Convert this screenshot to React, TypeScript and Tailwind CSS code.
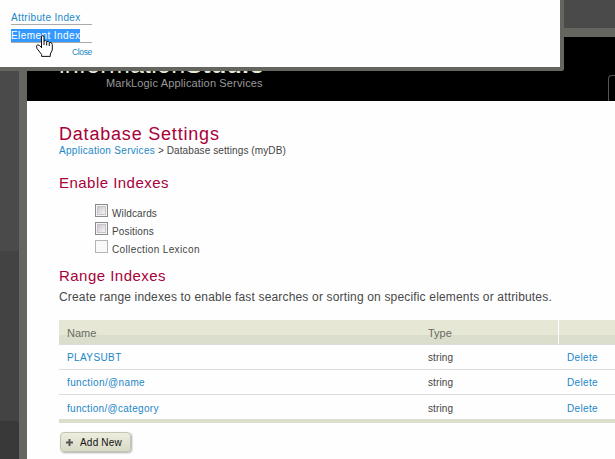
import React from "react";

const rows = [
  { name: "PLAYSUBT", tracking: "tracking-[0.4px]", pad: "pt-[2px]" },
  { name: "function/@name", tracking: "tracking-[0.36px]", pad: "pt-[2px]" },
  { name: "function/@category", tracking: "tracking-[0.3px]", pad: "pt-[4px]" },
];

function Check({ label, disabled, tracking }: { label: string; disabled?: boolean; tracking: string }) {
  return (
    <label className="flex h-[18px] items-start gap-[4px]">
      <span
        className={
          disabled
            ? "h-[13px] w-[13px] border border-[#b4b4b4] bg-[#f8f8f6]"
            : "flex h-[13px] w-[13px] border border-[#8a8a8a] bg-[#f4f4f4] p-px"
        }
      >
        {!disabled && <span className="flex-1 border border-[#c8c4c8] bg-linear-to-br from-[#cdc6cf] to-[#f6f4f6]" />}
      </span>
      <span className={"pt-[4px] text-[10px] leading-[12px] text-[#444] " + tracking}>{label}</span>
    </label>
  );
}

function HandCursor() {
  return (
    <svg className="absolute left-[36px] top-[35px]" width="17" height="22" viewBox="0 0 17 22">
      <path
        d="M5.5 13 V2 Q5.5 .6 6.7 .6 T8 2 V6 Q9.8 5 10.7 6.6 Q12.3 5.8 13.3 7.5 Q16 6.8 16.3 9.5 V15 L14.3 19 V21.4 H5.6 V19.5 L1 13.5 Q-.3 10.8 1.5 9.8 Q3 9.5 5.5 12.5"
        fill="#fff"
        stroke="#111"
        strokeWidth="1"
      />
      <path d="M8 6 V10 M10.7 7 V10.5 M13.3 8 V11" stroke="#111" fill="none" />
    </svg>
  );
}

export default function App() {
  return (
    <div className="relative flex h-[459px] w-[615px] overflow-hidden bg-[#fefefe] font-['Liberation_Sans',Arial,sans-serif]">
      <div className="flex h-full w-[19px] shrink-0 flex-col">
        <div className="h-[251px] bg-[#4a4a4a]" />
        <div className="h-[170px] bg-[#434343]" />
        <div className="flex-1 bg-[#393939]" />
      </div>
      <div className="h-full w-[8px] shrink-0 bg-[#666661]" />
      <div className="flex w-[588px] shrink-0 flex-col">
        <div className="h-[28px] bg-[#4a4a4a]" />
        <div className="h-[9px] bg-[#666661]" />
        <header className="flex h-[64px] justify-between overflow-hidden bg-black">
          <div className="pl-[32px] pt-[15px]">
            <div className="h-[24px] whitespace-nowrap text-[25px] leading-[24px] tracking-[0.25px] text-[#e9e9d9]">
              information<b>Studio</b>
            </div>
            <div className="whitespace-nowrap pl-[47px] text-[11px] leading-[14px] tracking-[0.15px] text-[#999]">
              MarkLogic Application Services
            </div>
          </div>
          <div className="mt-[38px] h-[40px] w-[7px] rounded-tl-[4px] border-l border-t border-[#555]" />
        </header>
        <main className="flex flex-col pl-[32px]">
          <h1 className="mt-[23px] text-[18px] leading-[20px] tracking-[0.8px] text-[#a80038]">Database Settings</h1>
          <div className="mt-px text-[10px] leading-[12px] tracking-[0.1px] text-[#444]">
            <span className="tracking-[0.3px] text-[#1a87c8]">Application Services</span> &gt; Database settings (myDB)
          </div>
          <h2 className="mt-[17px] text-[15px] leading-[18px] tracking-[0.47px] text-[#a80038]">Enable Indexes</h2>
          <div className="mt-[12px] pl-[36px]">
            <Check label="Wildcards" tracking="tracking-[0.12px]" />
            <Check label="Positions" tracking="tracking-[0.15px]" />
            <Check label="Collection Lexicon" disabled tracking="tracking-[0.37px]" />
          </div>
          <h2 className="mt-[9px] text-[15px] leading-[18px] tracking-[0.47px] text-[#a80038]">Range Indexes</h2>
          <p className="mt-[5px] whitespace-nowrap text-[12px] leading-[14px] tracking-[0.168px] text-[#484848]">
            Create range indexes to enable fast searches or sorting on specific elements or attributes.
          </p>
          <section className="mt-[16px] border-b-4 border-[#dbdecd]">
            <div className="flex h-[24px] bg-linear-to-b from-[#e6e8d5] from-[62.5%] to-[#dbdecd] to-[62.5%] text-[11px] leading-[26px] text-[#686860]">
              <span className="w-[369px] pl-[8px]">Name</span>
              <span className="w-[130px]">Type</span>
              <span className="w-px bg-white" />
            </div>
            {rows.map((r) => (
              <div
                key={r.name}
                className={"flex h-[25px] items-center border-t border-[#dcdcdc] text-[10px] leading-[12px] text-[#1a87c8] " + r.pad}
              >
                <span className={"w-[369px] pl-[8px] " + r.tracking}>{r.name}</span>
                <span className="w-[139px] tracking-[0.1px] text-[#444]">string</span>
                <span className="tracking-[0.33px]">Delete</span>
              </div>
            ))}
          </section>
          <button className="ml-px mt-[9px] flex h-[20px] w-[71px] items-center rounded-[4px] border border-[#c3c4b2] bg-linear-to-b from-[#ededde] to-[#d8dac7] text-[10px] leading-[12px] tracking-[0.2px] text-[#111] shadow-[1px_1px_2px_#aaa]">
            <svg className="ml-[5px] mr-[7px]" width="7" height="7" viewBox="0 0 7 7">
              <path d="M3.5 0V7M0 3.5H7" stroke="#555" strokeWidth="2" />
            </svg>
            <span className="pt-[2px]">Add New</span>
          </button>
        </main>
      </div>
      <div className="absolute left-0 top-0 h-[71px] w-[564px] rounded-br-[3px] border-b-4 border-r-4 border-[#666661] bg-[#fefefe] pl-[11px] pt-[11px]">
        <div className="flex w-[81px] flex-col text-[10px] tracking-[0.34px] text-[#1a87c8]">
          <div className="h-[14px] border-b border-[#aaa] leading-[13px]">Attribute Index</div>
          <div className="mt-[4px] flex h-[14px] border-b border-[#aaa] leading-[13px]">
            <span className="bg-[#3399ff] tracking-[0.42px] text-white">Element Index</span>
          </div>
          <div className="mt-[4px] self-end text-[8.5px] leading-[11px] tracking-[-0.35px]">Close</div>
        </div>
        <HandCursor />
      </div>
    </div>
  );
}
